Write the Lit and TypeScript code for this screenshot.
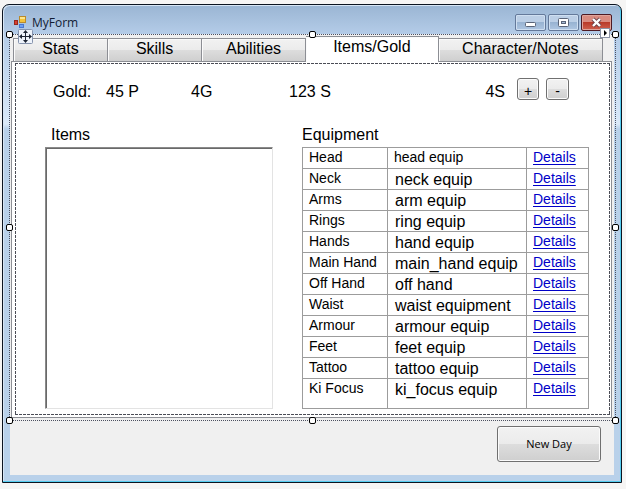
import { LitElement, html, css } from "lit";
import { customElement, property, state } from "lit/decorators.js";
import { classMap } from "lit/directives/class-map.js";

interface EquipmentSlot {
  name: string;
  value: string;
  small?: boolean;
}

const TABS = [
  { label: "Stats", size: "narrow" },
  { label: "Skills", size: "narrow" },
  { label: "Abilities", size: "medium" },
  { label: "Items/Gold", size: "wide" },
  { label: "Character/Notes", size: "widest" },
];

const EQUIPMENT: EquipmentSlot[] = [
  { name: "Head", value: "head equip", small: true },
  { name: "Neck", value: "neck equip" },
  { name: "Arms", value: "arm equip" },
  { name: "Rings", value: "ring equip" },
  { name: "Hands", value: "hand equip" },
  { name: "Main Hand", value: "main_hand equip" },
  { name: "Off Hand", value: "off hand" },
  { name: "Waist", value: "waist equipment" },
  { name: "Armour", value: "armour equip" },
  { name: "Feet", value: "feet equip" },
  { name: "Tattoo", value: "tattoo equip" },
  { name: "Ki Focus", value: "ki_focus equip" },
];

const HANDLES = ["nw", "n", "ne", "w", "e", "sw", "s", "se"];

/* Title bar with the form icon, caption and window buttons. */
@customElement("form-title-bar")
export class FormTitleBar extends LitElement {
  @property() caption = "";

  static styles = css`
    :host {
      display: flex;
      align-items: flex-start;
      height: 29px;
      box-sizing: border-box;
      padding: 9px 9px 0 11px;
    }
    .icon {
      flex: none;
      margin-top: 2px;
    }
    .caption {
      flex: 1;
      margin-left: 5px;
      font: 12px/17px "Open Sans", "Noto Sans", sans-serif;
      color: #111c33;
    }
    .buttons {
      display: flex;
      gap: 2px;
    }
    .button {
      display: grid;
      place-items: center;
      width: 31px;
      height: 17px;
      padding: 0;
      border: 1px solid #64799a;
      border-radius: 2px;
      box-shadow: inset 0 0 0 1px #cfdff1;
      background: linear-gradient(#bccfe6 0 45%, #98b3d2 50%, #afc6e2);
    }
    .close {
      border-color: #4d1a24;
      box-shadow: inset 0 0 0 1px #dfa49b;
      background: linear-gradient(#d98b80 0 45%, #b93b2a 50%, #cf6150);
    }
  `;

  render() {
    return html`
      <svg class="icon" width="13" height="13" viewBox="0 0 13 13" aria-hidden="true">
        <rect x="5.500" y=".5" width="6" height="6" fill="#f4c33a" stroke="#b98a2c" />
        <path d="M6 1h5v2H6z" fill="#fde58a" />
        <rect x=".5" y="4.500" width="3" height="4" fill="#d8402f" stroke="#96271f" />
        <rect x="5.500" y="8.500" width="4" height="3" fill="#6ba0f5" stroke="#4a77cf" />
      </svg>
      <span class="caption">${this.caption}</span>
      <div class="buttons">
        <button class="button" aria-label="Minimize">
          <svg width="13" height="9" viewBox="0 0 13 9">
            <rect x="1.500" y="4.500" width="10" height="4" rx="1" fill="#fff" stroke="#5a6478" />
          </svg>
        </button>
        <button class="button" aria-label="Maximize">
          <svg width="13" height="9" viewBox="0 0 13 9">
            <rect x="1.500" y=".5" width="10" height="8" rx="1" fill="#fff" stroke="#5a6478" />
            <rect x="4.500" y="3.500" width="4" height="2" fill="#a5bcd8" stroke="#5a6478" />
          </svg>
        </button>
        <button class="button close" aria-label="Close">
          <svg width="13" height="11" viewBox="0 0 13 11">
            <path d="M3 2l7 7M10 2l-7 7" stroke="#6a4048" stroke-width="4" />
            <path d="M3 2l7 7M10 2l-7 7" stroke="#fff" stroke-width="2.400" />
          </svg>
        </button>
      </div>
    `;
  }
}

/* Designer selection: dotted outline, grab handles, move glyph, smart tag. */
@customElement("selection-frame")
export class SelectionFrame extends LitElement {
  static styles = css`
    :host {
      position: absolute;
      inset: 0 -2px 0 -1px;
      z-index: 2;
      border: 1px dotted #4c5060;
      pointer-events: none;
    }
    .handle {
      position: absolute;
      box-sizing: border-box;
      width: 7px;
      height: 7px;
      border: 1px solid #000;
      border-radius: 2px;
      background: #fff;
    }
    .nw, .n, .ne { top: -4px; }
    .w, .e { top: calc(50% - 4px); }
    .sw, .s, .se { bottom: -4px; }
    .nw, .w, .sw { left: -4px; }
    .n, .s { left: calc(50% - 4px); }
    .ne, .e, .se { right: -4px; }
    .move {
      position: absolute;
      left: 8px;
      top: -6px;
    }
    .tag {
      position: absolute;
      right: 5px;
      top: -7px;
    }
  `;

  render() {
    return html`
      ${HANDLES.map((side) => html`<span class="handle ${side}"></span>`)}
      <svg class="move" width="15" height="15" viewBox="0 0 15 15">
        <rect x=".5" y=".5" width="14" height="14" rx="1" fill="#eef3fb" stroke="#8593ad" />
        <path d="M7.500 3v9M3 7.500h9" stroke="#1c2433" />
        <path
          d="M7.500 1l2.500 3H5zM7.500 14l2.500-3H5zM1 7.500l3-2.500v5zM14 7.500l-3-2.500v5z"
          fill="#1c2433"
        />
      </svg>
      <svg class="tag" width="10" height="10" viewBox="0 0 10 10">
        <rect x=".5" y=".5" width="9" height="9" fill="#fff" stroke="#8b93a5" />
        <path d="M4 2l3 3-3 3z" fill="#000" />
      </svg>
    `;
  }
}

@customElement("app-root")
export class AppRoot extends LitElement {
  @state() private selected = 3;

  static styles = css`
    :host {
      display: block;
      box-sizing: border-box;
      min-height: 100vh;
      padding: 4px 4px 6px 2px;
      background: #f6f5f4;
      font: 16px/20px "Liberation Sans", Arial, sans-serif;
      color: #000;
    }
    .window {
      box-sizing: border-box;
      border: 1px solid #0c1420;
      border-radius: 7px 7px 0 0;
      box-shadow: inset -1px -1px 0 #55cdf0, inset 1px 1px 0 #d8e6f5;
      background: linear-gradient(
        #9ab5d3,
        #b4cce8 29px,
        #d6e6f7 110px,
        #dceaf8 119px,
        #b9d1ea 124px
      );
    }
    .client {
      margin: 0 7px 7px;
      background: #f0f0f0;
    }
    .tab-control {
      position: relative;
      padding-bottom: 3px;
    }
    .tabs {
      display: flex;
      align-items: flex-end;
      padding: 2px 11px 0 3px;
    }
    .tab {
      flex: 94 1 0;
      box-sizing: border-box;
      height: 23px;
      padding: 0 0 2px;
      border: 1px solid #8c8e94;
      border-left-width: 0;
      border-bottom: 0;
      box-shadow: inset 1px 1px 0 #fbfbfb;
      background: linear-gradient(#f2f2f2, #ebebeb 50%, #dddddd 51%, #cfcfcf);
      font: inherit;
      color: inherit;
    }
    .tab:first-child {
      border-left-width: 1px;
    }
    .medium { flex-grow: 104; }
    .wide { flex-grow: 133; }
    .widest { flex-grow: 165; }
    .tab.selected {
      z-index: 1;
      height: 26px;
      margin-bottom: -1px;
      padding-bottom: 6px;
      background: #fff;
    }
    .panel {
      margin: 0 2px 0 1px;
      padding: 1px 1px 2px 3px;
      border: 1px solid #8c8e94;
      background: #fff;
    }
    .page {
      padding: 15px 21px 6px 30px;
      --dash: #4a4c55 0 3px, transparent 3px 4px;
      background:
        repeating-linear-gradient(90deg, var(--dash)) top / 100% 1px no-repeat,
        repeating-linear-gradient(90deg, var(--dash)) bottom / 100% 1px no-repeat,
        repeating-linear-gradient(var(--dash)) left / 1px 100% no-repeat,
        repeating-linear-gradient(var(--dash)) right / 1px 100% no-repeat;
    }
    .gold {
      display: grid;
      grid-template-columns: 53px 85px 98px 1fr auto 22px 30px;
      align-items: center;
      height: 27px;
      margin: 0 20px 20px 8px;
    }
    .silver {
      margin-right: 12px;
    }
    .push {
      box-sizing: border-box;
      padding: 0;
      border: 1px solid #707070;
      border-radius: 3px;
      box-shadow: inset 0 0 0 1px #fbfbfb;
      background: linear-gradient(#f2f2f2, #ebebeb 50%, #dddddd 51%, #cfcfcf);
      font: inherit;
      color: inherit;
    }
    .step {
      height: 22px;
      align-self: start;
      font-size: 14px;
      padding-top: 2px;
    }
    .minus {
      margin-left: 7px;
    }
    .lists {
      display: grid;
      grid-template-columns: 228fr 287fr;
      column-gap: 29px;
    }
    .list {
      display: flex;
      flex-direction: column;
      gap: 2px;
    }
    .list-label {
      padding-left: 6px;
    }
    .items {
      flex: 1;
      appearance: none;
      box-sizing: border-box;
      width: 100%;
      min-height: 0;
      border: 1px solid;
      border-color: #8a8a8a #e3e3e3 #e3e3e3 #8a8a8a;
      border-radius: 0;
      box-shadow: inset 1px 1px 0 #696969;
      background: #fff;
      outline: 0;
    }
    .equipment {
      width: 100%;
      border-collapse: collapse;
      table-layout: fixed;
    }
    .caption {
      padding-bottom: 2px;
      text-align: left;
    }
    .slot-col { width: 85px; }
    .link-col { width: 62px; }
    .cell {
      height: 20px;
      padding: 0 0 0 6px;
      border: 1px solid #9c9c9c;
      vertical-align: top;
      text-align: left;
      font-weight: normal;
      white-space: nowrap;
      line-height: 18px;
    }
    .row:last-child .cell {
      height: 29px;
    }
    .slot, .details, .small {
      font-size: 14px;
    }
    .value {
      padding-left: 7px;
      line-height: 22px;
    }
    .line {
      display: block;
      height: 20px;
    }
    .small {
      padding-left: 6px;
      line-height: 18px;
    }
    .link {
      color: #0000c8;
      text-decoration: underline;
      text-decoration-thickness: 1px;
      text-underline-offset: 2px;
    }
    .footer {
      display: flex;
      justify-content: flex-end;
      padding: 5px 13px 13px;
    }
    .new-day {
      width: 104px;
      height: 36px;
      font: 11px/16px "Open Sans", "Noto Sans", sans-serif;
    }
  `;

  private renderRow(slot: EquipmentSlot) {
    return html`
      <tr class="row">
        <th class="cell slot" scope="row">${slot.name}</th>
        <td class=${classMap({ cell: true, value: true, small: !!slot.small })}>
          <span class="line">${slot.value}</span>
        </td>
        <td class="cell details">
          <a class="link" href="#details">Details</a>
        </td>
      </tr>
    `;
  }

  render() {
    return html`
      <main class="window">
        <form-title-bar caption="MyForm"></form-title-bar>
        <div class="client">
          <section class="tab-control">
            <div class="tabs" role="tablist">
              ${TABS.map(
                (tab, i) => html`<button
                  role="tab"
                  aria-selected=${i === this.selected}
                  class="tab ${tab.size} ${i === this.selected ? "selected" : ""}"
                  @click=${() => (this.selected = i)}
                >${tab.label}</button>`
              )}
            </div>
            <div class="panel" role="tabpanel">
              <div class="page">
                <div class="gold">
                  <span>Gold:</span>
                  <span>45 P</span>
                  <span>4G</span>
                  <span>123 S</span>
                  <span class="silver">4S</span>
                  <button class="push step">+</button>
                  <button class="push step minus">-</button>
                </div>
                <div class="lists">
                  <div class="list">
                    <label class="list-label" for="items">Items</label>
                    <select class="items" id="items" multiple></select>
                  </div>
                  <table class="equipment">
                    <caption class="caption">Equipment</caption>
                    <colgroup>
                      <col class="slot-col" />
                      <col />
                      <col class="link-col" />
                    </colgroup>
                    <tbody>
                      ${EQUIPMENT.map((slot) => this.renderRow(slot))}
                    </tbody>
                  </table>
                </div>
              </div>
            </div>
            <selection-frame></selection-frame>
          </section>
          <div class="footer">
            <button class="push new-day">New Day</button>
          </div>
        </div>
      </main>
    `;
  }
}
